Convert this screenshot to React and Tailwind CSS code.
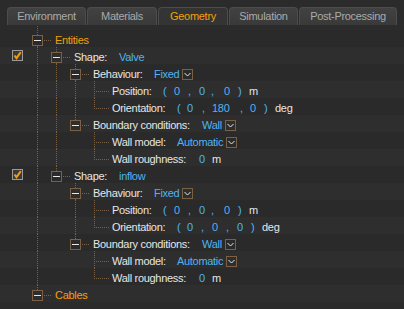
import React from "react";

const LINE = "#7a6145";

function PassCell({ on }) {
  return (
    <svg width="19" height="17" className="shrink-0 block">
      {on && <line x1="9.5" y1="0" x2="9.5" y2="17" stroke={LINE} strokeDasharray="1 1" />}
    </svg>
  );
}

function OwnCell({ box, next }) {
  return (
    <svg width="24" height="17" className="shrink-0 block">
      {box ? (
        <>
          <line x1="9.5" y1="0" x2="9.5" y2="5" stroke={LINE} strokeDasharray="1 1" />
          {next && <line x1="9.5" y1="16" x2="9.5" y2="17" stroke={LINE} strokeDasharray="1 1" />}
          <line x1="16" y1="10.5" x2="24" y2="10.5" stroke={LINE} strokeDasharray="1 1" />
          <rect x="4.5" y="5.5" width="10" height="10" fill="none" stroke={LINE} />
          <line x1="6" y1="10.5" x2="13" y2="10.5" stroke="#e8e8e8" />
        </>
      ) : (
        <>
          <line x1="9.5" y1="0" x2="9.5" y2={next ? 17 : 11} stroke={LINE} strokeDasharray="1 1" />
          <line x1="11" y1="10.5" x2="24" y2="10.5" stroke={LINE} strokeDasharray="1 1" />
        </>
      )}
    </svg>
  );
}

function Check() {
  return (
    <svg width="11" height="11" className="block ml-[12px] mt-[3px]">
      <rect x="0.5" y="0.5" width="10" height="10" fill="#3a3a3a" stroke="#9a9a9a" />
      <polyline points="2.5,5.5 4.5,8.2 8.8,2.2" fill="none" stroke="#f29a10" strokeWidth="2" />
    </svg>
  );
}

function Drop() {
  return (
    <svg width="11" height="11" className="block ml-[3px] mt-[2px] shrink-0">
      <rect x="0.5" y="0.5" width="10" height="10" fill="none" stroke={LINE} />
      <polyline points="2.5,4 5.5,7 8.5,4" fill="none" stroke="#e8e8e8" />
    </svg>
  );
}

function Row({ i, pass = [], box, next, check, children }) {
  return (
    <div className={`flex h-[17px] ${i % 2 === 1 ? "bg-[#2e2e2e]" : "bg-[#2a2a2a]"}`}>
      <div className="w-[28px] shrink-0">{check && <Check />}</div>
      {pass.map((p, k) => (
        <PassCell key={k} on={p} />
      ))}
      <OwnCell box={box} next={next} />
      <div className="ml-[3px] flex items-start pt-[3px] leading-[14px] whitespace-nowrap">{children}</div>
    </div>
  );
}

const L = ({ className = "", children }) => <span className={`text-[#e6e6e6] ${className}`}>{children}</span>;
const V = ({ className = "", children }) => <span className={`text-[#4fb4f2] ${className}`}>{children}</span>;
const O = ({ children }) => <span className="text-[#f2a007]">{children}</span>;

function PosVec() {
  return (
    <>
      <V className="w-[11px]">(</V>
      <V className="w-[14px]">0</V>
      <V className="w-[11px]">,</V>
      <V className="w-[12px]">0</V>
      <V className="w-[13px]">,</V>
      <V className="w-[14px]">0</V>
      <V className="w-[11px]">)</V>
      <L>m</L>
    </>
  );
}

function Tab({ w, active, children }) {
  return (
    <div
      className={`${w} h-[18px] mr-px rounded-t-[4px] border border-b-0 border-[#4c4c4c] text-center leading-[16px] ${
        active ? "bg-[#343434] text-[#f2a007]" : "bg-gradient-to-b from-[#424242] to-[#393939] text-[#aaaaaa]"
      }`}
    >
      {children}
    </div>
  );
}

export default function App() {
  return (
    <div className="w-[404px] h-[309px] overflow-hidden bg-[#2b2b2b] font-['Liberation_Sans',Arial,sans-serif] text-[11px] tracking-[-0.3px]">
      <div className="h-[25px] flex items-end pl-[7px] bg-[#2b2b2b]">
        <Tab w="w-[79px]">Environment</Tab>
        <Tab w="w-[70px]">Materials</Tab>
        <Tab w="w-[70px]" active>Geometry</Tab>
        <Tab w="w-[69px]">Simulation</Tab>
        <Tab w="w-[98px]">Post-Processing</Tab>
      </div>
      <div className="h-[5px] flex bg-[#2b2b2b]">
        <svg width="47" height="5" className="block ml-[28px]">
          <line x1="9.5" y1="1" x2="9.5" y2="5" stroke={LINE} strokeDasharray="1 1" />
        </svg>
      </div>

      <Row i={0} box next>
        <O>Entities</O>
      </Row>
      <Row i={1} pass={[true]} box next check>
        <L className="w-[45px]">Shape:</L>
        <V>Valve</V>
      </Row>
      <Row i={2} pass={[true, true]} box next>
        <L className="w-[61px]">Behaviour:</L>
        <V>Fixed</V>
        <Drop />
      </Row>
      <Row i={3} pass={[true, true, true]} next>
        <L className="w-[51px]">Position:</L>
        <PosVec />
      </Row>
      <Row i={4} pass={[true, true, true]}>
        <L className="w-[65px]">Orientation:</L>
        <V className="w-[10px]">(</V>
        <V className="w-[15px]">0</V>
        <V className="w-[10px]">,</V>
        <V className="w-[28px]">180</V>
        <V className="w-[10px]">,</V>
        <V className="w-[14px]">0</V>
        <V className="w-[11px]">)</V>
        <L>deg</L>
      </Row>
      <Row i={5} pass={[true, true]} box>
        <L className="w-[109px]">Boundary conditions:</L>
        <V>Wall</V>
        <Drop />
      </Row>
      <Row i={6} pass={[true, true, false]} next>
        <L className="w-[65px]">Wall model:</L>
        <V>Automatic</V>
        <Drop />
      </Row>
      <Row i={7} pass={[true, true, false]}>
        <L className="w-[87px]">Wall roughness:</L>
        <V className="w-[13px]">0</V>
        <L>m</L>
      </Row>
      <Row i={8} pass={[true]} box check>
        <L className="w-[45px]">Shape:</L>
        <V>inflow</V>
      </Row>
      <Row i={9} pass={[true, false]} box next>
        <L className="w-[61px]">Behaviour:</L>
        <V>Fixed</V>
        <Drop />
      </Row>
      <Row i={10} pass={[true, false, true]} next>
        <L className="w-[51px]">Position:</L>
        <PosVec />
      </Row>
      <Row i={11} pass={[true, false, true]}>
        <L className="w-[65px]">Orientation:</L>
        <V className="w-[10px]">(</V>
        <V className="w-[14px]">0</V>
        <V className="w-[11px]">,</V>
        <V className="w-[14px]">0</V>
        <V className="w-[11px]">,</V>
        <V className="w-[14px]">0</V>
        <V className="w-[11px]">)</V>
        <L>deg</L>
      </Row>
      <Row i={12} pass={[true, false]} box>
        <L className="w-[109px]">Boundary conditions:</L>
        <V>Wall</V>
        <Drop />
      </Row>
      <Row i={13} pass={[true, false, false]} next>
        <L className="w-[65px]">Wall model:</L>
        <V>Automatic</V>
        <Drop />
      </Row>
      <Row i={14} pass={[true, false, false]}>
        <L className="w-[87px]">Wall roughness:</L>
        <V className="w-[13px]">0</V>
        <L>m</L>
      </Row>
      <Row i={15} box>
        <O>Cables</O>
      </Row>
    </div>
  );
}
